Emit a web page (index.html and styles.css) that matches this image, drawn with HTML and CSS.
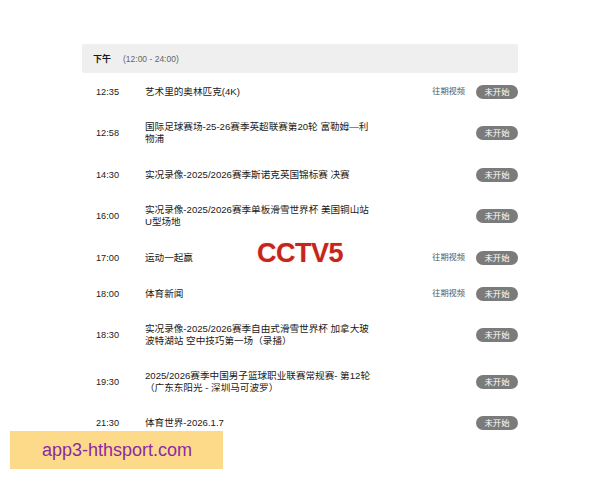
FILE: index.html
```html
<!DOCTYPE html>
<html lang="zh-CN">
<head>
<meta charset="utf-8">
<link rel="stylesheet" href="styles.css">
</head>
<body>
<div class="page">
  <div class="schedule">
    <div class="period">
      <span class="period-name">下午</span>
      <span class="period-range">(12:00 - 24:00)</span>
    </div>
    <div class="row">
      <div class="time">12:35</div>
      <div class="title">艺术里的奥林匹克(4K)</div>
      <div class="actions"><span class="replay">往期视频</span><span class="badge">未开始</span></div>
    </div>
    <div class="row">
      <div class="time">12:58</div>
      <div class="title">国际足球赛场-25-26赛季英超联赛第20轮 富勒姆—利物浦</div>
      <div class="actions"><span class="badge">未开始</span></div>
    </div>
    <div class="row">
      <div class="time">14:30</div>
      <div class="title">实况录像-2025/2026赛季斯诺克英国锦标赛 决赛</div>
      <div class="actions"><span class="badge">未开始</span></div>
    </div>
    <div class="row">
      <div class="time">16:00</div>
      <div class="title">实况录像-2025/2026赛季单板滑雪世界杯 美国铜山站U型场地</div>
      <div class="actions"><span class="badge">未开始</span></div>
    </div>
    <div class="row">
      <div class="time">17:00</div>
      <div class="title">运动一起赢</div>
      <div class="actions"><span class="replay">往期视频</span><span class="badge">未开始</span></div>
    </div>
    <div class="row">
      <div class="time">18:00</div>
      <div class="title">体育新闻</div>
      <div class="actions"><span class="replay">往期视频</span><span class="badge">未开始</span></div>
    </div>
    <div class="row">
      <div class="time">18:30</div>
      <div class="title">实况录像-2025/2026赛季自由式滑雪世界杯 加拿大玻波特湖站 空中技巧第一场（录播）</div>
      <div class="actions"><span class="badge">未开始</span></div>
    </div>
    <div class="row">
      <div class="time">19:30</div>
      <div class="title">2025/2026赛季中国男子篮球职业联赛常规赛- 第12轮<br>（广东东阳光 - 深圳马可波罗）</div>
      <div class="actions"><span class="badge">未开始</span></div>
    </div>
    <div class="row">
      <div class="time">21:30</div>
      <div class="title">体育世界-2026.1.7</div>
      <div class="actions"><span class="badge">未开始</span></div>
    </div>
  </div>
  <div class="watermark">CCTV5</div>
  <div class="banner">app3-hthsport.com</div>
</div>
</body>
</html>
```
FILE: styles.css
```css
html, body {
  margin: 0;
  padding: 0;
  background: #ffffff;
}
body {
  width: 600px;
  height: 480px;
  overflow: hidden;
  font-family: "Liberation Sans", "Noto Sans CJK SC", sans-serif;
  color: #1a1a1a;
}
.page {
  position: relative;
  width: 600px;
  height: 480px;
  padding-top: 44px;
  box-sizing: border-box;
}
.schedule {
  margin-left: 82px;
  width: 436px;
}
.period {
  height: 29px;
  background: #efefef;
  display: flex;
  align-items: center;
  padding-left: 11px;
  font-size: 9px;
  border-radius: 2px;
}
.period-name {
  font-weight: bold;
  color: #1a1a1a;
  width: 30px;
}
.period-range {
  color: #666;
  font-size: 8.5px;
}
.row {
  display: flex;
  align-items: center;
  padding: 12px 0 10.4px;
  font-size: 9.6px;
  line-height: 12px;
}
.time {
  width: 49px;
  padding-left: 14px;
  flex: none;
  font-size: 9.2px;
  color: #1a1a1a;
}
.title {
  width: 228px;
  flex: none;
  color: #1a1a1a;
}
.actions {
  flex: 1;
  display: flex;
  justify-content: flex-end;
  align-items: center;
  gap: 11px;
}
.replay {
  font-size: 8.2px;
  color: #555;
}
.badge {
  width: 42px;
  height: 14px;
  border-radius: 7px;
  background: #7b7b7b;
  color: #ffffff;
  font-size: 8.4px;
  line-height: 14px;
  text-align: center;
}
.watermark {
  position: absolute;
  left: 257px;
  top: 238px;
  font-family: "Liberation Sans", sans-serif;
  font-weight: bold;
  font-size: 27px;
  letter-spacing: -0.5px;
  color: #c4261b;
  text-shadow: 0 0 2px rgba(255, 200, 190, 0.8);
}
.banner {
  position: absolute;
  left: 10px;
  top: 431px;
  width: 213px;
  height: 38px;
  background: #fdd98a;
  color: #8a2aa6;
  font-family: "Liberation Sans", sans-serif;
  font-size: 18px;
  line-height: 39px;
  padding-left: 32px;
  box-sizing: border-box;
}
```
